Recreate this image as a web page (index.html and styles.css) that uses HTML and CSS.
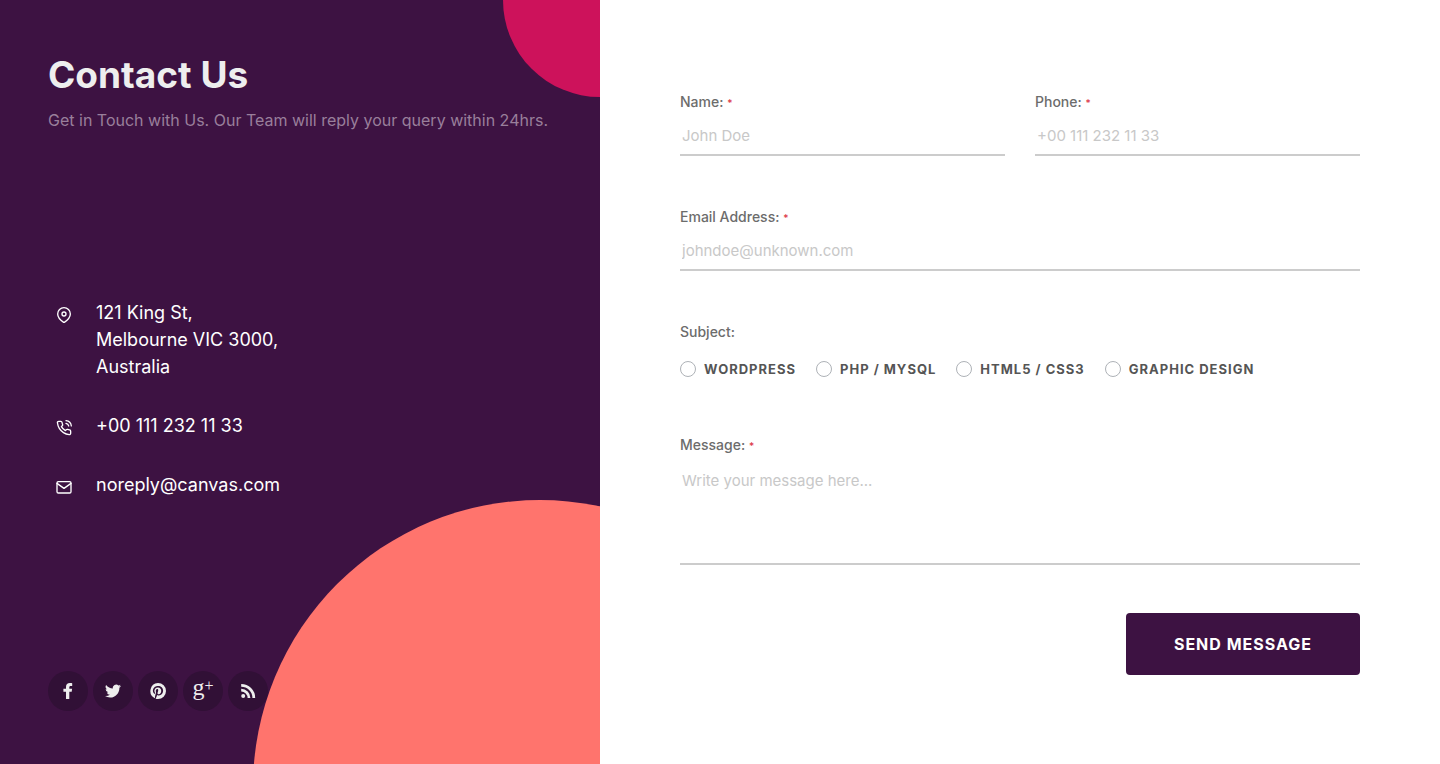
FILE: index.html
```html
<!DOCTYPE html>
<html lang="en">
<head>
<meta charset="utf-8">
<meta name="viewport" content="width=device-width, initial-scale=1">
<title>Contact Us</title>
<link rel="stylesheet" href="styles.css">
</head>
<body>
<main class="page">
  <section class="info">
    <span class="circle circle-pink"></span>
    <header class="intro">
      <h1 class="title">Contact Us</h1>
      <p class="lead">Get in Touch with Us. Our Team will reply your query within 24hrs.</p>
    </header>
    <address class="details">
      <div class="detail">
        <svg class="detail-icon" viewBox="0 0 24 24" aria-hidden="true"><path d="M21.500 10.500c0 6.500-9.500 13-9.500 13s-9.500-6.500-9.500-13a9.500 9.500 0 0 1 19 0z"/><circle cx="12" cy="10.500" r="3"/></svg>
        <span>121 King St,<br>Melbourne VIC 3000,<br>Australia</span>
      </div>
      <div class="detail">
        <svg class="detail-icon" viewBox="0 0 24 24" aria-hidden="true"><path d="M15.050 5A5 5 0 0 1 19 8.950M15.050 1A9 9 0 0 1 23 8.940m-1 7.980v3a2 2 0 0 1-2.180 2 19.790 19.790 0 0 1-8.630-3.070 19.500 19.500 0 0 1-6-6 19.790 19.790 0 0 1-3.070-8.670A2 2 0 0 1 4.110 2h3a2 2 0 0 1 2 1.720 12.840 12.840 0 0 0 .7 2.810 2 2 0 0 1-.45 2.110L8.090 9.910a16 16 0 0 0 6 6l1.270-1.270a2 2 0 0 1 2.110-.45 12.840 12.840 0 0 0 2.810.7A2 2 0 0 1 22 16.920z"/></svg>
        <a class="detail-link" href="tel:+001112321133">+00 111 232 11 33</a>
      </div>
      <div class="detail">
        <svg class="detail-icon" viewBox="0 0 24 24" aria-hidden="true"><rect x="1.500" y="4" width="21" height="17" rx="2"/><path d="M1.500 6.500 12 14l10.500-7.500"/></svg>
        <a class="detail-link" href="mailto:noreply@canvas.com">noreply@canvas.com</a>
      </div>
    </address>
    <nav class="social" aria-label="Social links">
      <a class="social-link" href="#" aria-label="Facebook"><svg class="social-icon" viewBox="0 0 16 16"><path d="M6 16V8.800H3.400V5.800H6V3.900C6 1.400 7.400 0 9.900 0c1 0 1.900.1 2.300.2v2.700h-1.400c-1.200 0-1.500.6-1.500 1.400v1.500h2.800l-.4 3H9.300V16z"/></svg></a>
      <a class="social-link" href="#" aria-label="Twitter"><svg class="social-icon" viewBox="0 0 24 24"><path d="M24 4.560a9.800 9.800 0 0 1-2.830.78 4.930 4.930 0 0 0 2.160-2.720 9.900 9.900 0 0 1-3.120 1.190 4.920 4.920 0 0 0-8.390 4.490A13.980 13.980 0 0 1 1.670 3.150a4.930 4.930 0 0 0 1.520 6.570 4.900 4.900 0 0 1-2.230-.61v.06a4.930 4.930 0 0 0 3.950 4.830 4.900 4.900 0 0 1-2.220.08 4.930 4.930 0 0 0 4.600 3.420A9.900 9.900 0 0 1 0 19.540 13.950 13.950 0 0 0 7.550 21.750c9.140 0 14.310-7.720 13.990-14.640A10 10 0 0 0 24 4.560z"/></svg></a>
      <a class="social-link" href="#" aria-label="Pinterest"><svg class="social-icon" viewBox="0 0 24 24"><path fill-rule="evenodd" d="M12 0a12 12 0 0 1 0 24c-1.240 0-2.430-.19-3.550-.54.490-.8 1.220-2.100 1.490-3.150l.75-2.850c.39.750 1.530 1.380 2.740 1.380 3.610 0 6.210-3.320 6.210-7.440 0-3.950-3.230-6.910-7.380-6.910-5.160 0-7.900 3.460-7.900 7.240 0 1.750.93 3.940 2.430 4.640.23.100.35.060.4-.16l.33-1.370a.36.360 0 0 0-.08-.35C6.950 13.890 6.550 12.800 6.550 11.780c0-2.620 1.980-5.150 5.360-5.150 2.920 0 4.960 1.990 4.960 4.830 0 3.210-1.620 5.440-3.730 5.440-1.170 0-2.040-.96-1.760-2.140.34-1.420.99-2.940.99-3.960 0-.92-.49-1.680-1.510-1.680-1.200 0-2.160 1.240-2.160 2.900 0 1.060.36 1.770.36 1.770L7.620 19.900c-.25 1.050-.15 2.100-.07 2.970A12 12 0 0 1 12 0z"/></svg></a>
      <a class="social-link social-google" href="#" aria-label="Google Plus">g<sup class="social-plus">+</sup></a>
      <a class="social-link" href="#" aria-label="RSS"><svg class="social-icon" viewBox="0 0 16 16"><circle cx="3.200" cy="13" r="2"/><path d="M1.200 5.800v2.800a6.400 6.400 0 0 1 6.400 6.400h2.800a9.200 9.200 0 0 0-9.200-9.200zm0-4.800v2.800A11.200 11.200 0 0 1 12.400 15h2.800a14 14 0 0 0-14-14z"/></svg></a>
    </nav>
    <span class="circle circle-coral"></span>
  </section>

  <form class="form">
    <div class="row">
      <div class="field">
        <label class="label" for="name">Name: <small class="required">*</small></label>
        <input class="control" id="name" type="text" placeholder="John Doe" required>
      </div>
      <div class="field">
        <label class="label" for="phone">Phone: <small class="required">*</small></label>
        <input class="control" id="phone" type="tel" placeholder="+00 111 232 11 33" required>
      </div>
    </div>
    <div class="field">
      <label class="label" for="email">Email Address: <small class="required">*</small></label>
      <input class="control" id="email" type="email" placeholder="johndoe@unknown.com" required>
    </div>
    <fieldset class="field subject">
      <legend class="label">Subject:</legend>
      <div class="options">
        <label class="option"><input class="radio" type="radio" name="subject">WordPress</label>
        <label class="option"><input class="radio" type="radio" name="subject">PHP / MySQL</label>
        <label class="option"><input class="radio" type="radio" name="subject">HTML5 / CSS3</label>
        <label class="option"><input class="radio" type="radio" name="subject">Graphic Design</label>
      </div>
    </fieldset>
    <div class="field">
      <label class="label" for="message">Message: <small class="required">*</small></label>
      <textarea class="control message" id="message" placeholder="Write your message here..." required></textarea>
    </div>
    <button class="submit" type="submit">Send Message</button>
  </form>
</main>
</body>
</html>
```

FILE: styles.css
```css
* {
  box-sizing: border-box;
}

body {
  margin: 0;
  background: #fff;
  color: #555;
  font-family: Inter, "Liberation Sans", sans-serif;
  font-size: 16px;
}

.page {
  display: grid;
  grid-template-columns: 5fr 7fr;
  min-height: 100vh;
}

/* Contact panel */
.info {
  position: relative;
  display: flex;
  flex-direction: column;
  justify-content: space-between;
  overflow: hidden;
  padding: 48px 48px 53px;
  background: #3d1242;
}

.circle {
  position: absolute;
  border-radius: 50%;
}

.circle-pink {
  top: -97px;
  right: -97px;
  width: 194px;
  height: 194px;
  background: #cd125b;
}

.circle-coral {
  right: -227px;
  bottom: -310px;
  width: 574px;
  height: 574px;
  background: #ff746d;
}

.title {
  margin: 0;
  color: #eee;
  font-size: 37px;
  font-weight: 700;
  line-height: 54px;
}

.lead {
  margin: 6px 0 0;
  color: #997f9b;
  font-size: 16px;
  line-height: 24px;
  white-space: nowrap;
}

.details {
  display: grid;
  gap: 32px;
  margin-bottom: 6px;
  color: #fff;
  font-size: 18px;
  font-style: normal;
  line-height: 27px;
}

.detail {
  display: flex;
  gap: 24px;
  padding-left: 8px;
}

.detail-icon {
  width: 16px;
  height: 16px;
  margin-top: 8px;
  fill: none;
  stroke: #fff;
  stroke-width: 2;
  stroke-linecap: round;
  stroke-linejoin: round;
}

.detail-link {
  color: #fff;
  text-decoration: none;
}

.social {
  display: flex;
  gap: 5px;
}

.social-link {
  display: flex;
  align-items: center;
  justify-content: center;
  width: 40px;
  height: 40px;
  border-radius: 50%;
  background: #311036;
  color: #eee;
  text-decoration: none;
}

.social-icon {
  width: 16px;
  height: 16px;
  fill: #eee;
}

.social-google {
  align-items: flex-start;
  font-family: "Liberation Serif", serif;
  font-size: 24px;
  line-height: 32px;
}

.social-plus {
  font-size: 16px;
  line-height: 30px;
}

/* Form */
.form {
  display: flex;
  flex-direction: column;
  justify-content: center;
  gap: 48px;
  padding: 48px 80px;
}

.row {
  display: grid;
  grid-template-columns: 1fr 1fr;
  gap: 30px;
}

.field {
  display: flex;
  flex-direction: column;
  min-width: 0;
}

.label {
  padding: 2px 0 0;
  color: #6c6c6c;
  font-size: 14px;
  font-weight: 500;
  line-height: 22px;
}

.required {
  color: #dc3545;
  font-size: 10px;
  line-height: 1;
}

.control {
  width: 100%;
  height: 43px;
  padding: 5px 2px 2px;
  border: 0;
  border-bottom: 2px solid #ccc;
  border-radius: 0;
  outline: 0;
  background: transparent;
  color: #555;
  font-family: inherit;
  font-size: 15px;
  line-height: 22px;
}

.control::placeholder {
  color: #c8c8c8;
  opacity: 1;
}

.message {
  height: 109px;
  padding-top: 14px;
  resize: none;
}

.subject {
  margin: 0;
  padding: 0;
  border: 0;
}

.options {
  display: flex;
  flex-wrap: wrap;
  gap: 20px;
  padding: 16px 0 5px;
}

.option {
  display: flex;
  align-items: center;
  gap: 8px;
  font-size: 13px;
  font-weight: 700;
  letter-spacing: 1px;
  line-height: 20px;
  text-transform: uppercase;
}

.radio {
  width: 16px;
  height: 16px;
  margin: 0;
  border: 1px solid #aeb2b7;
  border-radius: 50%;
  appearance: none;
}

.radio:checked {
  border: 5px solid #3d1242;
}

.submit {
  align-self: flex-end;
  padding: 20px 48px;
  border: 0;
  border-radius: 4px;
  background: #3d1242;
  color: #fff;
  font-family: inherit;
  font-size: 16px;
  font-weight: 700;
  letter-spacing: 1px;
  line-height: 22px;
  text-transform: uppercase;
  cursor: pointer;
}
```
